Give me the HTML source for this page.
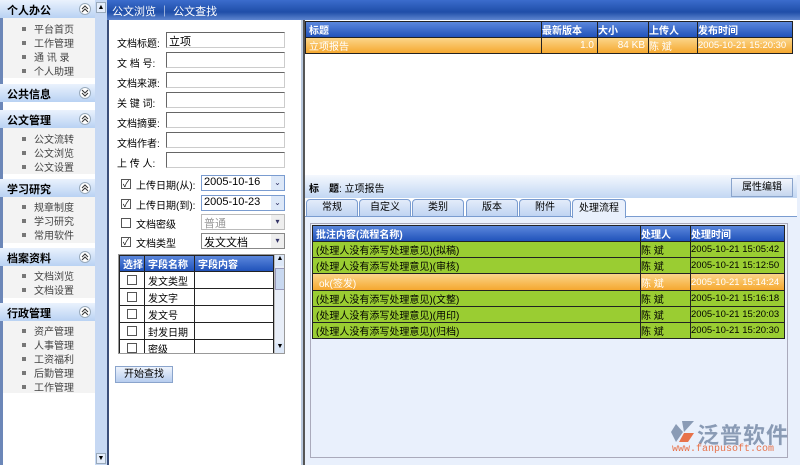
<!DOCTYPE html>
<html><head><meta charset="utf-8"><style>
*{box-sizing:border-box;margin:0;padding:0}
body{width:800px;height:465px;overflow:hidden;background:#fff;font-family:"Liberation Sans","Noto Sans CJK SC",sans-serif;font-size:11px;color:#000;position:relative}
.a{position:absolute}
.hd{position:absolute;left:0;width:95px;height:18px;background:linear-gradient(#eaf2fd,#b9d2f3);font-weight:bold;font-size:11px;padding:2px 0 0 7px;color:#000}
.hd i{position:absolute;left:79px;top:3px;width:12px;height:12px;border-radius:6px;background:#fff;border:1px solid #9ab}
.hd i svg{position:absolute;left:1px;top:1px}
.it{position:absolute;left:22px;font-size:10px;color:#444}
.it:before{content:"";display:inline-block;width:4px;height:4px;background:#777;margin-right:8px;vertical-align:2px}
.lb{position:absolute;left:117px;font-size:10px}
.in{position:absolute;left:166px;width:119px;height:16px;border:1px solid #666;border-right-color:#ccc;border-bottom-color:#ccc;background:#fff;font-size:11px;padding-left:2px}
.cb{position:absolute;width:10px;height:10px;border:1px solid #555;background:#fff;font-size:9px;line-height:8px;text-align:center}
.sel{position:absolute;left:201px;width:84px;height:16px;border:1px solid #888;background:#fff;font-size:11px;padding-left:2px}
.sel b{position:absolute;right:0;top:0;width:13px;height:14px;background:#dde8f8;font-size:8px;text-align:center;line-height:14px;color:#336;font-weight:normal}
table{border-collapse:collapse}
.tg td{border:1px solid #222;height:17px;font-size:10px;padding-left:3px}
.th{background:linear-gradient(#5b87dc,#1d4fb8);color:#fff;font-weight:bold}
</style></head><body>
<div class="a" style="left:0;top:0;width:95px;height:465px;background:#fff;border-left:3px solid #6c87b8"></div>
<div class="a" style="left:3px;top:18px;width:92px;height:375px;background:#f3f3f3"></div>
<div class="hd" style="top:0">个人办公<i><svg width="8" height="8"><path d="M1 4 L4 1 L7 4 M1 7 L4 4 L7 7" stroke="#333" fill="none"/></svg></i></div>
<div class="it" style="top:21px">平台首页</div><div class="it" style="top:35px">工作管理</div><div class="it" style="top:49px">通 讯 录</div><div class="it" style="top:63px">个人助理</div>
<div class="a" style="left:3px;top:78px;width:92px;height:6px;background:#fff"></div>
<div class="hd" style="top:84px">公共信息<i><svg width="8" height="8"><path d="M1 1 L4 4 L7 1 M1 4 L4 7 L7 4" stroke="#333" fill="none"/></svg></i></div>
<div class="a" style="left:3px;top:102px;width:92px;height:8px;background:#fff"></div>
<div class="hd" style="top:110px">公文管理<i><svg width="8" height="8"><path d="M1 4 L4 1 L7 4 M1 7 L4 4 L7 7" stroke="#333" fill="none"/></svg></i></div>
<div class="it" style="top:131px">公文流转</div><div class="it" style="top:145px">公文浏览</div><div class="it" style="top:159px">公文设置</div>
<div class="a" style="left:3px;top:174px;width:92px;height:5px;background:#fff"></div>
<div class="hd" style="top:179px">学习研究<i><svg width="8" height="8"><path d="M1 4 L4 1 L7 4 M1 7 L4 4 L7 7" stroke="#333" fill="none"/></svg></i></div>
<div class="it" style="top:199px">规章制度</div><div class="it" style="top:213px">学习研究</div><div class="it" style="top:227px">常用软件</div>
<div class="a" style="left:3px;top:243px;width:92px;height:5px;background:#fff"></div>
<div class="hd" style="top:248px">档案资料<i><svg width="8" height="8"><path d="M1 4 L4 1 L7 4 M1 7 L4 4 L7 7" stroke="#333" fill="none"/></svg></i></div>
<div class="it" style="top:268px">文档浏览</div><div class="it" style="top:282px">文档设置</div>
<div class="a" style="left:3px;top:298px;width:92px;height:5px;background:#fff"></div>
<div class="hd" style="top:303px">行政管理<i><svg width="8" height="8"><path d="M1 4 L4 1 L7 4 M1 7 L4 4 L7 7" stroke="#333" fill="none"/></svg></i></div>
<div class="it" style="top:323px">资产管理</div><div class="it" style="top:337px">人事管理</div><div class="it" style="top:351px">工资福利</div><div class="it" style="top:365px">后勤管理</div><div class="it" style="top:379px">工作管理</div>
<div class="a" style="left:95px;top:0;width:12px;height:465px;background:#c6d8f3"></div>
<div class="a" style="left:96px;top:2px;width:10px;height:11px;background:#e4edfb;border:1px solid #9ab;font-size:7px;text-align:center;line-height:9px">▲</div>
<div class="a" style="left:96px;top:453px;width:10px;height:11px;background:#e4edfb;border:1px solid #9ab;font-size:7px;text-align:center;line-height:9px">▼</div>
<div class="a" style="left:107px;top:0;width:693px;height:20px;background:linear-gradient(#3b6ccc,#1f4ea8 60%,#5d85cf);color:#fff;font-size:11px;padding:3px 0 0 5px">公文浏览 ｜ 公文查找</div>
<div class="a" style="left:107px;top:20px;width:196px;height:445px;background:#fff;border-left:2px solid #3a4e7a;border-right:2px solid #b9c8dd"></div>
<div class="lb" style="top:35px">文档标题:</div><div class="in" style="top:32px">立项</div>
<div class="lb" style="top:55px">文 档 号:</div><div class="in" style="top:52px"></div>
<div class="lb" style="top:75px">文档来源:</div><div class="in" style="top:72px"></div>
<div class="lb" style="top:95px">关 键 词:</div><div class="in" style="top:92px"></div>
<div class="lb" style="top:115px">文档摘要:</div><div class="in" style="top:112px"></div>
<div class="lb" style="top:135px">文档作者:</div><div class="in" style="top:132px"></div>
<div class="lb" style="top:155px">上 传 人:</div><div class="in" style="top:152px"></div>
<div class="cb" style="left:121px;top:179px">✓</div><div class="lb" style="left:136px;top:177px">上传日期(从):</div><div class="sel" style="top:175px;border-color:#7a9cd0">2005-10-16<b>⌄</b></div>
<div class="cb" style="left:121px;top:199px">✓</div><div class="lb" style="left:136px;top:197px">上传日期(到):</div><div class="sel" style="top:195px;border-color:#7a9cd0">2005-10-23<b>⌄</b></div>
<div class="cb" style="left:121px;top:218px"></div><div class="lb" style="left:136px;top:216px">文档密级</div><div class="sel" style="top:214px;color:#999;border-color:#bbb">普通<b style="background:#eee">▾</b></div>
<div class="cb" style="left:121px;top:237px">✓</div><div class="lb" style="left:136px;top:235px">文档类型</div><div class="sel" style="top:233px">发文文档<b style="background:#eee">▾</b></div>
<div class="a" style="left:118px;top:254px;width:167px;height:100px;overflow:hidden;border:1px solid #999">
<table class="tg" style="width:155px">
<tr class="th"><td style="width:25px;height:12px">选择</td><td style="width:50px;height:12px">字段名称</td><td style="height:12px">字段内容</td></tr>
<tr><td><div class="cb" style="position:relative;left:4px"></div></td><td>发文类型</td><td></td></tr>
<tr><td><div class="cb" style="position:relative;left:4px"></div></td><td>发文字</td><td></td></tr>
<tr><td><div class="cb" style="position:relative;left:4px"></div></td><td>发文号</td><td></td></tr>
<tr><td><div class="cb" style="position:relative;left:4px"></div></td><td>封发日期</td><td></td></tr>
<tr><td><div class="cb" style="position:relative;left:4px"></div></td><td>密级</td><td></td></tr>
<tr><td></td><td>缓急</td><td></td></tr>
</table>
<div class="a" style="left:155px;top:0;width:11px;height:99px;background:#e8eef8;border-left:1px solid #bbb"><div style="height:11px;background:#dde8f8;font-size:7px;text-align:center">▲</div><div style="margin-top:2px;height:22px;background:#c8d8f0;border:1px solid #99b"></div><div class="a" style="bottom:0;width:10px;height:11px;font-size:7px;text-align:center;background:#dde8f8">▼</div></div>
</div>
<div class="a" style="left:115px;top:366px;width:58px;height:17px;background:linear-gradient(#eef3fc,#b7cdef);border:1px solid #8aa4cc;font-size:10px;text-align:center;line-height:15px">开始查找</div>
<div class="a" style="left:303px;top:20px;width:494px;height:155px;background:#fff;border-left:2px solid #555"></div>
<table class="a" style="left:305px;top:21px;width:488px;font-size:10px">
<tr class="th" style="height:14px"><td style="border:1px solid #222;width:236px;padding-left:3px">标题</td><td style="border:1px solid #222;width:56px">最新版本</td><td style="border:1px solid #222;width:51px">大小</td><td style="border:1px solid #222;width:49px">上传人</td><td style="border:1px solid #222">发布时间</td></tr>
<tr style="height:16px;background:linear-gradient(#fbd58a,#f5a52a);color:#fff"><td style="border:1px solid #222;padding-left:3px">立项报告</td><td style="border:1px solid #222;text-align:right;padding-right:3px">1.0</td><td style="border:1px solid #222;text-align:right;padding-right:3px">84 KB</td><td style="border:1px solid #222">陈 斌</td><td style="border:1px solid #222;font-size:9.5px">2005-10-21 15:20:30</td></tr>
</table>
<div class="a" style="left:303px;top:175px;width:497px;height:290px;background:#e9f0fc;border-left:2px solid #555"></div>
<div class="a" style="left:305px;top:175px;width:492px;height:23px;background:linear-gradient(#f4f8fe,#c2d7f3);font-size:10px;padding:5px 0 0 4px"><b>标　题</b>: 立项报告</div>
<div class="a" style="left:731px;top:178px;width:62px;height:19px;background:linear-gradient(#f3f6fc,#c5d6ee);border:1px solid #8aa4cc;font-size:10px;text-align:center;line-height:17px">属性编辑</div>
<div class="a" style="left:305px;top:198px;width:492px;height:19px;background:#fff"></div>
<div class="a" style="left:305px;top:216px;width:492px;height:1px;background:#7a9cd0"></div>
<div class="a" style="left:306px;top:199px;width:52px;height:18px;background:linear-gradient(#e3ecfa,#c0d4f2);border:1px solid #7a9cd0;border-radius:4px 4px 0 0;font-size:10px;text-align:center;line-height:16px">常规</div>
<div class="a" style="left:359px;top:199px;width:52px;height:18px;background:linear-gradient(#e3ecfa,#c0d4f2);border:1px solid #7a9cd0;border-radius:4px 4px 0 0;font-size:10px;text-align:center;line-height:16px">自定义</div>
<div class="a" style="left:412px;top:199px;width:52px;height:18px;background:linear-gradient(#e3ecfa,#c0d4f2);border:1px solid #7a9cd0;border-radius:4px 4px 0 0;font-size:10px;text-align:center;line-height:16px">类别</div>
<div class="a" style="left:466px;top:199px;width:52px;height:18px;background:linear-gradient(#e3ecfa,#c0d4f2);border:1px solid #7a9cd0;border-radius:4px 4px 0 0;font-size:10px;text-align:center;line-height:16px">版本</div>
<div class="a" style="left:519px;top:199px;width:52px;height:18px;background:linear-gradient(#e3ecfa,#c0d4f2);border:1px solid #7a9cd0;border-radius:4px 4px 0 0;font-size:10px;text-align:center;line-height:16px">附件</div>
<div class="a" style="left:572px;top:199px;width:54px;height:19px;background:#e9f0fc;border:1px solid #7a9cd0;border-bottom:none;border-radius:4px 4px 0 0;font-size:10px;text-align:center;line-height:17px">处理流程</div>
<div class="a" style="left:310px;top:223px;width:478px;height:235px;border:1px solid #aab;background:#e9f0fc"></div>
<table class="a" style="left:312px;top:225px;width:473px;font-size:10px">
<tr class="th" style="height:13px"><td style="border:1px solid #222;width:328px;padding-left:3px">批注内容(流程名称)</td><td style="border:1px solid #222;width:50px">处理人</td><td style="border:1px solid #222">处理时间</td></tr>
<tr style="height:16px;background:#9acd32"><td style="border:1px solid #222;padding-left:3px">(处理人没有添写处理意见)(拟稿)</td><td style="border:1px solid #222">陈 斌</td><td style="border:1px solid #222;font-size:9.5px">2005-10-21 15:05:42</td></tr>
<tr style="height:16px;background:#9acd32"><td style="border:1px solid #222;padding-left:3px">(处理人没有添写处理意见)(审核)</td><td style="border:1px solid #222">陈 斌</td><td style="border:1px solid #222;font-size:9.5px">2005-10-21 15:12:50</td></tr>
<tr style="height:17px;background:linear-gradient(#fbd58a,#f5a52a);color:#fff"><td style="border:1px solid #222;padding-left:6px">ok(签发)</td><td style="border:1px solid #222">陈 斌</td><td style="border:1px solid #222;font-size:9.5px">2005-10-21 15:14:24</td></tr>
<tr style="height:16px;background:#9acd32"><td style="border:1px solid #222;padding-left:3px">(处理人没有添写处理意见)(文整)</td><td style="border:1px solid #222">陈 斌</td><td style="border:1px solid #222;font-size:9.5px">2005-10-21 15:16:18</td></tr>
<tr style="height:16px;background:#9acd32"><td style="border:1px solid #222;padding-left:3px">(处理人没有添写处理意见)(用印)</td><td style="border:1px solid #222">陈 斌</td><td style="border:1px solid #222;font-size:9.5px">2005-10-21 15:20:03</td></tr>
<tr style="height:16px;background:#9acd32"><td style="border:1px solid #222;padding-left:3px">(处理人没有添写处理意见)(归档)</td><td style="border:1px solid #222">陈 斌</td><td style="border:1px solid #222;font-size:9.5px">2005-10-21 15:20:30</td></tr>
</table>
<svg class="a" style="left:670px;top:420px" width="26" height="24" viewBox="0 0 26 24"><path d="M12 1 L24 1 L14 12 Z" fill="#8a9bb5"/><path d="M6 4 L13 12 L6 22 L1 12 Z" fill="#8a9bb5"/><path d="M14 13 L24 13 L18 22 L9 22 Z" fill="#e8724a"/></svg>
<div class="a" style="left:697px;top:418px;font-size:22px;color:#8a9bb5;font-weight:bold;letter-spacing:1px">泛普软件</div>
<div class="a" style="left:672px;top:444px;font-size:10px;color:#e8724a;font-family:'Liberation Mono',monospace">www.fanpusoft.com</div>
</body></html>
